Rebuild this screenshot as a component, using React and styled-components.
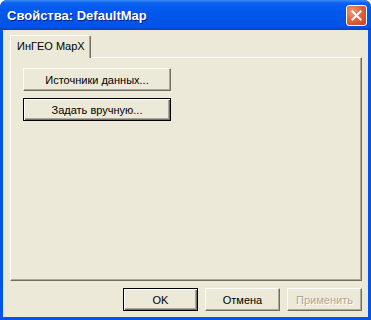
import React from 'react';
import styled, { createGlobalStyle } from 'styled-components';

const GlobalStyle = createGlobalStyle`
  html, body {
    margin: 0;
    padding: 0;
    background: #ffffff;
  }
`;

const Window = styled.div`
  width: 371px;
  height: 320px;
  display: flex;
  flex-direction: column;
  box-sizing: border-box;
  background: #0055ea;
  border-radius: 7px 7px 0 0;
  overflow: hidden;
  font-family: 'Liberation Sans', Arial, sans-serif;
`;

const TitleBar = styled.div`
  height: 30px;
  flex: none;
  display: flex;
  align-items: center;
  justify-content: space-between;
  padding: 0 4px 0 7px;
  box-sizing: border-box;
  background: linear-gradient(
    to bottom,
    #3d8bf8 0%,
    #0a63ef 10%,
    #0058ee 35%,
    #0055e5 70%,
    #0153e9 88%,
    #0042c8 100%
  );
`;

const Title = styled.div`
  color: #ffffff;
  font-weight: bold;
  font-size: 13px;
  letter-spacing: 0;
  text-shadow: 1px 1px 0 #0a1e8a;
`;

const CloseButton = styled.div`
  width: 21px;
  height: 21px;
  box-sizing: border-box;
  border: 1px solid #ffffff;
  border-radius: 3px;
  background: radial-gradient(circle at 30% 30%, #f19a7c 0%, #e2643e 45%, #c7401d 100%);
  display: flex;
  align-items: center;
  justify-content: center;
`;

const Client = styled.div`
  flex: 1;
  margin: 0 3px 4px 3px;
  background: #ece9d8;
  display: flex;
  flex-direction: column;
  padding: 5px 6px 6px 7px;
  box-sizing: border-box;
`;

const TabStrip = styled.div`
  display: flex;
  height: 22px;
  flex: none;
  position: relative;
  z-index: 1;
`;

const Tab = styled.div`
  width: 81px;
  height: 23px;
  box-sizing: border-box;
  border-top: 1px solid #ffffff;
  border-left: 1px solid #ffffff;
  border-right: 1px solid #716f64;
  box-shadow: inset -1px 0 0 #aca899;
  border-radius: 2px 2px 0 0;
  background: #ece9d8;
  font-size: 11px;
  color: #000000;
  padding: 4px 0 0 6px;
`;

const Panel = styled.div`
  height: 224px;
  box-sizing: border-box;
  border-top: 1px solid #ffffff;
  border-left: 1px solid #ffffff;
  border-right: 1px solid #716f64;
  border-bottom: 1px solid #716f64;
  box-shadow: inset -1px -1px 0 #aca899;
  display: flex;
  flex-direction: column;
  align-items: flex-start;
  gap: 7px;
  padding: 10px 0 0 12px;
`;

const Button = styled.div`
  width: ${p => p.$w || 148}px;
  height: 23px;
  box-sizing: border-box;
  display: flex;
  align-items: center;
  justify-content: center;
  font-size: 11px;
  color: ${p => (p.$disabled ? '#aca899' : '#000000')};
  text-shadow: ${p => (p.$disabled ? '1px 1px 0 #ffffff' : 'none')};
  background: #ece9d8;
  border: 1px solid ${p => (p.$default ? '#000000' : 'transparent')};
  box-shadow: ${p =>
    p.$default
      ? 'inset 1px 1px 0 #ffffff, inset -1px -1px 0 #716f64, inset -2px -2px 0 #aca899'
      : 'inset 1px 1px 0 #ffffff, inset -1px -1px 0 #716f64, inset -2px -2px 0 #aca899'};
  ${p =>
    !p.$default &&
    `border-top-color: #ffffff; border-left-color: #ffffff; border-right-color: #716f64; border-bottom-color: #716f64;
     box-shadow: inset -1px -1px 0 #aca899;`}
`;

const ButtonRow = styled.div`
  display: flex;
  justify-content: flex-end;
  gap: 7px;
  margin-top: 7px;
  padding-right: 0;
`;

const App = () => (
  <>
    <GlobalStyle />
    <Window>
      <TitleBar>
        <Title>Свойства: DefaultMap</Title>
        <CloseButton>
          <svg width="11" height="11" viewBox="0 0 11 11">
            <path d="M1.5 1.5 L9.5 9.5 M9.5 1.5 L1.5 9.5" stroke="#ffffff" strokeWidth="2" strokeLinecap="square" />
          </svg>
        </CloseButton>
      </TitleBar>
      <Client>
        <TabStrip>
          <Tab>ИнГЕО MapX</Tab>
        </TabStrip>
        <Panel>
          <Button>Источники данных...</Button>
          <Button $default>Задать вручную...</Button>
        </Panel>
        <ButtonRow>
          <Button $w={75} $default>OK</Button>
          <Button $w={75}>Отмена</Button>
          <Button $w={75} $disabled>Применить</Button>
        </ButtonRow>
      </Client>
    </Window>
  </>
);

export default App;
